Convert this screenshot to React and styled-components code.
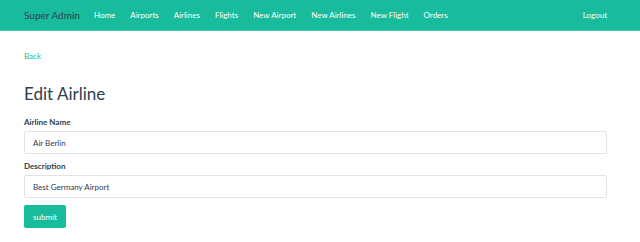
import { createGlobalStyle, styled } from 'styled-components';

const GlobalStyle = createGlobalStyle`
  * { box-sizing: border-box; }
  body {
    margin: 0;
    font-family: Lato, "Open Sans", sans-serif;
    background: #fff;
    color: #2c3e50;
  }
`;

const navLinks = ['Home', 'Airports', 'Airlines', 'Flights', 'New Airport', 'New Airlines', 'New Flight', 'Orders'];

const App = () => {
  return (
    <>
      <GlobalStyle />
      <Navbar>
        <Brand>Super Admin</Brand>
        <NavList>
          {navLinks.map((link) => (
            <NavItem key={link}>{link}</NavItem>
          ))}
        </NavList>
        <NavItem>Logout</NavItem>
      </Navbar>
      <Container>
        <BackLink href="#">Back</BackLink>
        <Title>Edit Airline</Title>
        <Field>
          <Label>Airline Name</Label>
          <Input defaultValue="Air Berlin" />
        </Field>
        <Field>
          <Label>Description</Label>
          <Input defaultValue="Best Germany Airport" />
        </Field>
        <SubmitButton>submit</SubmitButton>
      </Container>
    </>
  );
};

export default App;

const Navbar = styled.nav`
  height: 31px;
  display: flex;
  align-items: center;
  padding: 0 33px 1px 24px;
  background: #18bc9c;
  border-bottom: 1px solid #3fcdb0;
`;

const Brand = styled.span`
  font-size: 10px;
  color: #2c3e50;
  margin-right: 14px;
`;

const NavList = styled.div`
  display: flex;
  gap: 15px;
  flex: 1;
`;

const NavItem = styled.span`
  font-size: 8px;
  color: #fff;
`;

const Container = styled.div`
  padding: 0 33px 0 24px;
`;

const BackLink = styled.a`
  display: block;
  margin-top: 20px;
  font-size: 8px;
  color: #18bc9c;
  text-decoration: none;
`;

const Title = styled.h1`
  margin: 22px 0 13px;
  font-size: 17px;
  font-weight: 400;
  color: #2c3e50;
`;

const Field = styled.div`
  margin-bottom: 7px;
`;

const Label = styled.label`
  display: block;
  margin-bottom: 4px;
  font-size: 8px;
  font-weight: 700;
  color: #2c3e50;
`;

const Input = styled.input`
  display: block;
  width: 100%;
  height: 23px;
  padding: 0 8px;
  border: 1px solid #dce4ec;
  border-radius: 2px;
  font-family: Lato, sans-serif;
  font-size: 8px;
  color: #2c3e50;
  outline: none;
`;

const SubmitButton = styled.button`
  display: block;
  height: 23px;
  padding: 0 9px;
  border: none;
  border-radius: 2px;
  background: #18bc9c;
  color: #fff;
  font-family: Lato, sans-serif;
  font-size: 8px;
`;
